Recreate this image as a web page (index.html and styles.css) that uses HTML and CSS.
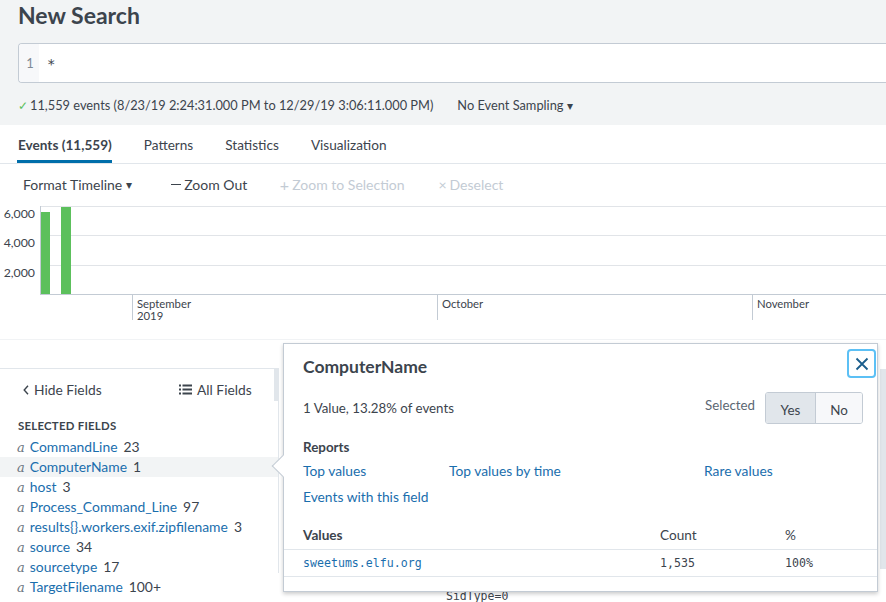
FILE: index.html
```html
<!DOCTYPE html>
<html>
<head>
<meta charset="utf-8">
<link rel="stylesheet" href="styles.css">
</head>
<body>
<div class="top">
  <h1 class="title">New Search</h1>
  <div class="searchbox">
    <div class="gutter">1</div>
    <div class="query">*</div>
  </div>
  <div class="status">
    <span class="check">✓</span><span class="count">11,559 events (8/23/19 2:24:31.000 PM to 12/29/19 3:06:11.000 PM)</span>
    <span class="sampling">No Event Sampling <span class="caret">▾</span></span>
  </div>
</div>

<div class="tabs">
  <span class="tab active">Events (11,559)</span>
  <span class="tab">Patterns</span>
  <span class="tab">Statistics</span>
  <span class="tab">Visualization</span>
</div>

<div class="toolbar">
  <span class="tool">Format Timeline<span class="caret tcaret">▾</span></span>
  <span class="tool zoomout"><span class="minus"></span>Zoom Out</span>
  <span class="tool disabled zsel"><span class="plus">+</span>Zoom to Selection</span>
  <span class="tool disabled desel"><span class="xx">×</span>Deselect</span>
</div>

<div class="chart">
  <svg width="886" height="133" viewBox="0 206 886 133" xmlns="http://www.w3.org/2000/svg">
    <g stroke="#e1e4e8" stroke-width="1">
      <line x1="40" y1="206.5" x2="886" y2="206.5"/>
      <line x1="40" y1="235.5" x2="886" y2="235.5"/>
      <line x1="40" y1="265.5" x2="886" y2="265.5"/>
    </g>
    <g stroke="#c3cbd4" stroke-width="1">
      <line x1="40.5" y1="206" x2="40.5" y2="294"/>
      <line x1="40" y1="294.5" x2="886" y2="294.5"/>
      <line x1="132.5" y1="294" x2="132.5" y2="320"/>
      <line x1="437.5" y1="294" x2="437.5" y2="320"/>
      <line x1="752.5" y1="294" x2="752.5" y2="320"/>
    </g>
    <rect x="41" y="212" width="9" height="82" fill="#5cc05c"/>
    <rect x="61" y="207" width="10" height="87" fill="#5cc05c"/>
    <g class="ylab" text-anchor="end">
      <text x="35" y="218">6,000</text>
      <text x="35" y="247">4,000</text>
      <text x="35" y="277">2,000</text>
    </g>
    <g class="xlab">
      <text x="137" y="308">September</text>
      <text x="137" y="320">2019</text>
      <text x="442" y="308">October</text>
      <text x="757" y="308">November</text>
    </g>
  </svg>
</div>

<div class="lower">
  <aside class="sidebar">
    <div class="sidehead">
      <span class="hide"><svg class="chev" width="6" height="10" viewBox="0 0 6 10"><path d="M5 0.8 L1.2 5 L5 9.2" fill="none" stroke="#3c444d" stroke-width="1.4"/></svg>Hide Fields</span>
      <span class="all"><svg class="listicon" width="13" height="11" viewBox="0 0 13 11"><g fill="#3c444d"><rect x="0" y="0.5" width="2" height="2"/><rect x="0" y="4.5" width="2" height="2"/><rect x="0" y="8.5" width="2" height="2"/><rect x="3.5" y="0.5" width="9.5" height="2"/><rect x="3.5" y="4.5" width="9.5" height="2"/><rect x="3.5" y="8.5" width="9.5" height="2"/></g></svg> All Fields</span>
    </div>
    <div class="sectlabel">SELECTED FIELDS</div>
    <ul class="fields">
      <li><i>a</i><span class="fname">CommandLine</span><span class="fcount">23</span></li>
      <li class="hl"><i>a</i><span class="fname">ComputerName</span><span class="fcount">1</span></li>
      <li><i>a</i><span class="fname">host</span><span class="fcount">3</span></li>
      <li><i>a</i><span class="fname">Process_Command_Line</span><span class="fcount">97</span></li>
      <li><i>a</i><span class="fname">results{}.workers.exif.zipfilename</span><span class="fcount">3</span></li>
      <li><i>a</i><span class="fname">source</span><span class="fcount">34</span></li>
      <li><i>a</i><span class="fname">sourcetype</span><span class="fcount">17</span></li>
      <li><i>a</i><span class="fname">TargetFilename</span><span class="fcount">100+</span></li>
    </ul>
    <div class="thumb"></div>
  </aside>
  <main class="events">
    <div class="evline">SidType=0</div>
    <div class="vscroll"></div>
  </main>

  <div class="popup">
    <div class="arrow"></div>
    <button class="close"><svg width="14" height="14" viewBox="0 0 14 14"><path d="M1.5 1.5 L12.5 12.5 M12.5 1.5 L1.5 12.5" stroke="#1a5d8c" stroke-width="1.8" fill="none"/></svg></button>
    <h2 class="ptitle">ComputerName</h2>
    <div class="prow">
      <span>1 Value, 13.28% of events</span>
      <span class="selwrap"><span class="sellabel">Selected</span><span class="seg"><span class="segbtn on">Yes</span><span class="segbtn">No</span></span></span>
    </div>
    <div class="reports">Reports</div>
    <div class="links">
      <a class="l1">Top values</a>
      <a class="l2">Top values by time</a>
      <a class="l3">Rare values</a>
    </div>
    <div class="links2"><a>Events with this field</a></div>
    <table class="vals">
      <thead><tr><th class="c1">Values</th><th class="c2">Count</th><th class="c3">%</th></tr></thead>
      <tbody><tr><td class="c1 mono link">sweetums.elfu.org</td><td class="c2 mono">1,535</td><td class="c3 mono">100%</td></tr></tbody>
    </table>
  </div>
</div>
</body>
</html>
```

FILE: styles.css
```css
* { box-sizing: border-box; }
html, body { margin: 0; padding: 0; }
body {
  width: 886px;
  height: 602px;
  overflow: hidden;
  background: #fff;
  font-family: Lato, "Open Sans", sans-serif;
  color: #3c444d;
  font-size: 13px;
}
.top {
  background: #f2f4f5;
  height: 125px;
  padding: 0 0 0 18px;
}
.title {
  margin: 0;
  padding-top: 1px;
  font-size: 23px;
  font-weight: 700;
  line-height: 29px;
  color: #3c444d;
}
.searchbox {
  margin-top: 13px;
  height: 40px;
  display: flex;
  border: 1px solid #c3cbd4;
  border-right: none;
  border-radius: 4px 0 0 4px;
  background: #fff;
  overflow: hidden;
}
.gutter {
  width: 20px;
  background: #f7f8fa;
  color: #7f8a96;
  font-size: 13px;
  line-height: 38px;
  text-align: center;
  padding-left: 2px;
}
.query {
  padding-left: 8px;
  line-height: 40px;
  font-family: "DejaVu Sans Mono", monospace;
  font-size: 14px;
  color: #3c444d;
}
.status {
  display: flex;
  align-items: center;
  height: 18px;
  margin-top: 13px;
  font-size: 12.8px;
  color: #3c444d;
}
.check { color: #5cc05c; font-size: 12px; margin-right: 2px; }
.sampling { margin-left: 24px; }
.caret { font-size: 12px; }

.tabs {
  height: 39px;
  border-bottom: 1px solid #e1e6eb;
  display: flex;
  align-items: stretch;
  padding-left: 17px;
}
.tab {
  font-size: 13.6px;
  line-height: 38px;
  padding-top: 1px;
  margin-right: 31px;
  color: #3c444d;
  border-bottom: 3px solid transparent;
  padding-left: 1px;
}
.tab.active {
  font-weight: 700;
  border-bottom-color: #006eaa;
}
.toolbar {
  height: 42px;
  display: flex;
  align-items: center;
  padding-left: 23px;
  padding-bottom: 2px;
  font-size: 14px;
}
.tool { color: #3c444d; display: flex; align-items: center; }
.tcaret { margin-left: 4px; }
.zoomout { margin-left: 39px; }
.minus {
  display: inline-block;
  width: 10px;
  height: 1px;
  background: #3c444d;
  margin-right: 3px;
}
.plus { width: 10px; margin-right: 3px; font-size: 16px; text-align: center; }
.xx { width: 8px; margin-right: 3px; font-size: 14px; }
.zsel { margin-left: 32px; }
.desel { margin-left: 34px; }
.disabled { color: #c3cbd4; }

.chart { height: 133px; }
.chart svg { display: block; }
.ylab text { font-family: Lato, sans-serif; font-size: 12.3px; fill: #3c444d; }
.xlab text { font-family: Lato, sans-serif; font-size: 11.3px; fill: #3c444d; }

.lower {
  position: relative;
  display: flex;
  height: 234px;
  border-top: 1px solid #f1f3f5;
}
.sidebar {
  position: relative;
  width: 279px;
  flex: none;
  border-right: 1px solid #e1e6eb;
  margin-top: 28px;
  border-top: 1px solid #e1e6eb;
}
.sidehead {
  height: 41px;
  display: flex;
  align-items: center;
  padding-left: 23px;
  font-size: 13.8px;
}
.hide { width: 156px; display: flex; align-items: center; }
.chev { margin-right: 5px; }
.all { display: flex; align-items: center; gap: 5px; }
.sectlabel {
  margin-top: 9px;
  padding-left: 18px;
  font-size: 11.4px;
  letter-spacing: 0.25px;
  font-weight: 700;
  line-height: 14px;
  color: #3c444d;
}
.fields {
  list-style: none;
  margin: 4px 0 0;
  padding: 0;
}
.fields li {
  height: 20px;
  line-height: 20px;
  padding-left: 17px;
  font-size: 13.9px;
  white-space: nowrap;
}
.fields li.hl { background: #f2f4f5; }
.fields i {
  font-family: "DejaVu Serif", "Liberation Serif", serif;
  color: #6b7580;
  font-size: 13px;
  margin-right: 5px;
}
.fname { color: #1a6ead; margin-right: 6px; }
.fcount { color: #3c444d; }
.thumb {
  position: absolute;
  right: -1px;
  top: 0;
  width: 5px;
  height: 32px;
  background: #e1e6eb;
}
.events { position: relative; flex: 1; }
.evline {
  position: absolute;
  left: 167px;
  top: 249px;
  font-family: "DejaVu Sans Mono", monospace;
  font-size: 11.5px;
  color: #3c444d;
}
.vscroll {
  position: absolute;
  right: 0;
  top: 29px;
  width: 6px;
  height: 200px;
  background: #e1e6eb;
}

.popup {
  position: absolute;
  left: 283px;
  top: 3px;
  width: 595px;
  height: 249px;
  background: #fff;
  border: 1px solid #c3cbd4;
  box-shadow: 0 2px 4px rgba(0,0,0,0.2);
  padding: 0 0 0 19px;
}
.arrow {
  position: absolute;
  left: -9px;
  top: 114px;
  width: 16px;
  height: 16px;
  background: #fff;
  border-left: 1px solid #c3cbd4;
  border-bottom: 1px solid #c3cbd4;
  transform: rotate(45deg);
}
.close {
  position: absolute;
  right: 1px;
  top: 5px;
  width: 29px;
  height: 29px;
  border: 2px solid #5cc0f5;
  border-radius: 4px;
  background: #fff;
  padding: 0;
  display: flex;
  align-items: center;
  justify-content: center;
}
.ptitle {
  margin: 0;
  padding-top: 12px;
  font-size: 17.5px;
  line-height: 22px;
  font-weight: 700;
  color: #3c444d;
}
.prow {
  margin-top: 14px;
  display: flex;
  justify-content: space-between;
  align-items: center;
  height: 32px;
  font-size: 13.3px;
  padding-right: 14px;
}
.selwrap { display: flex; align-items: center; }
.sellabel { color: #5c6773; margin-right: 10px; margin-top: -6px; }
.seg {
  display: flex;
  border: 1px solid #c3cbd4;
  border-radius: 3px;
  overflow: hidden;
  height: 32px;
}
.segbtn {
  width: 46px;
  text-align: center;
  line-height: 31px;
  padding-top: 2px;
  background: #f7f8fa;
  font-size: 13.4px;
}
.segbtn.on {
  background: #e1e6eb;
  border-right: 1px solid #c3cbd4;
  width: 50px;
}
.reports {
  margin-top: 15px;
  font-weight: 700;
  font-size: 13.4px;
  line-height: 17px;
}
.links {
  display: flex;
  margin-top: 6px;
  font-size: 13.8px;
  line-height: 17px;
}
.links a, .links2 a { color: #1a6ead; }
.l1 { width: 146px; }
.l2 { width: 255px; }
.links2 {
  margin-top: 9px;
  font-size: 13.8px;
  line-height: 17px;
}
.vals {
  margin-top: 16px;
  margin-left: -19px;
  width: 593px;
  border-collapse: collapse;
  font-size: 13.6px;
}
.vals th {
  text-align: left;
  font-weight: 400;
  height: 28px;
  border-bottom: 1px solid #e1e6eb;
  padding: 0;
}
.vals th.c1 { font-weight: 700; }
.vals td {
  height: 27px;
  border-bottom: 1px solid #e1e6eb;
  padding: 0;
}
.c1 { padding-left: 19px !important; width: 376px; }
.c2 { width: 125px; }
.mono {
  font-family: "DejaVu Sans Mono", monospace;
  font-size: 11.6px;
}
.link { color: #1a6ead; }
```
